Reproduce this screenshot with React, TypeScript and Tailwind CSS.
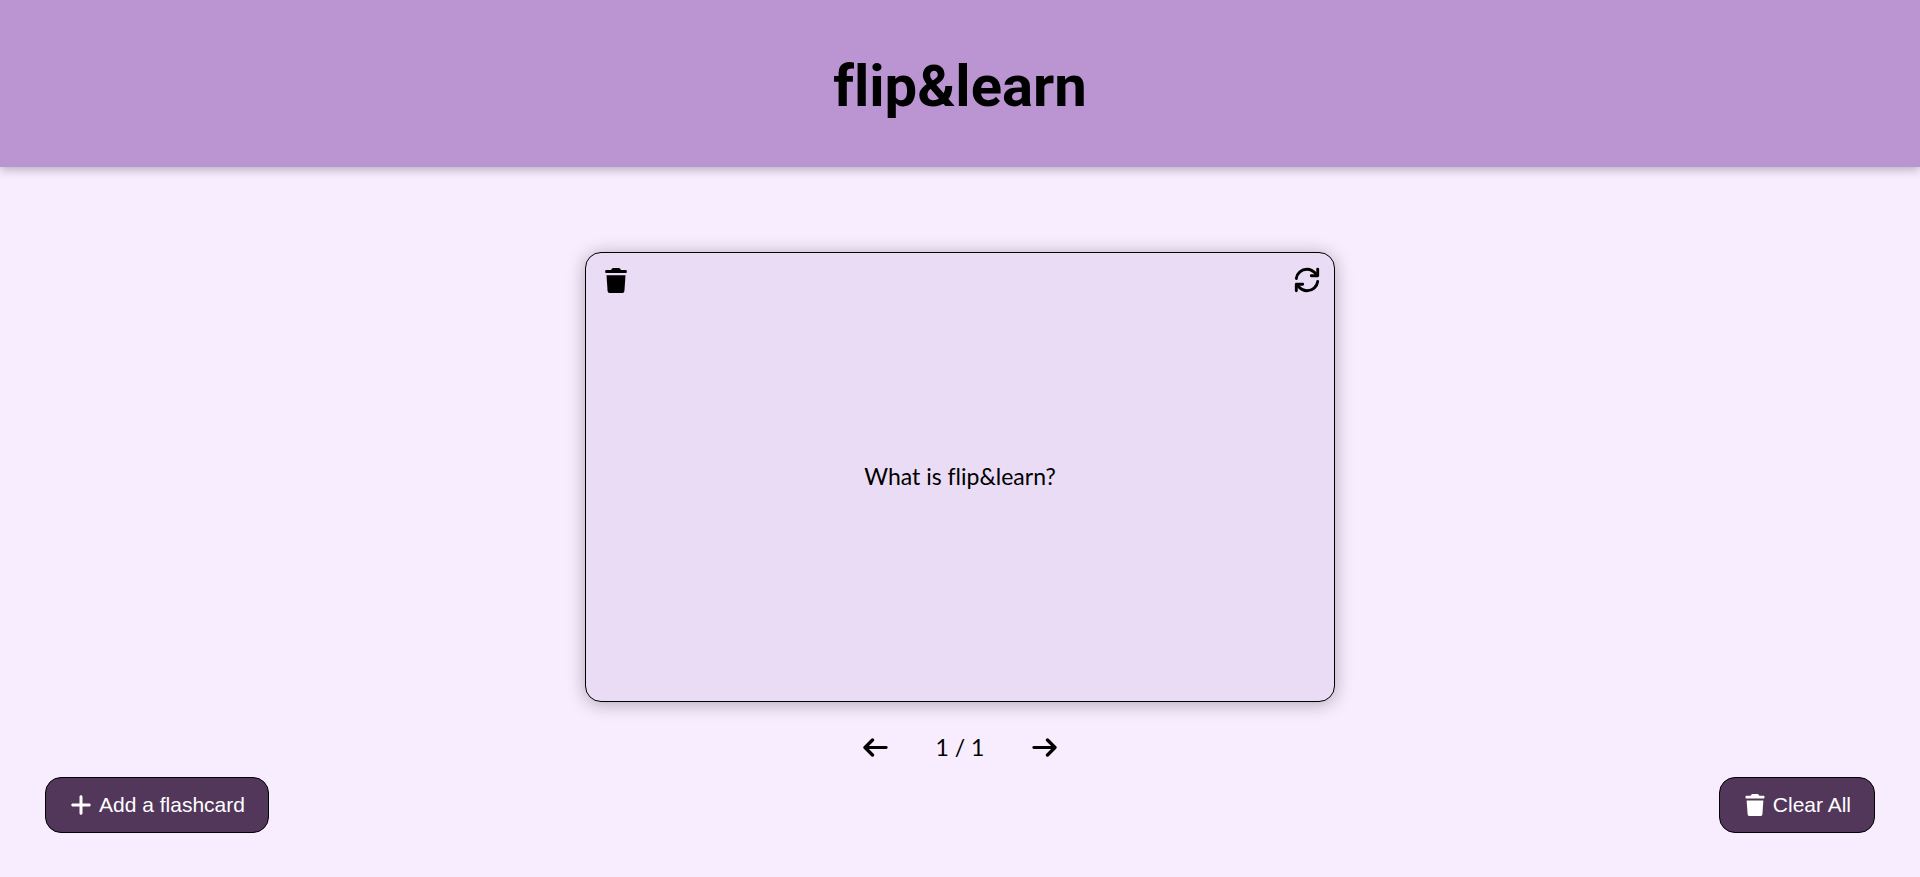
import { useState } from "react";
import { FaPlus } from "react-icons/fa6";

const card = {
  question: "What is flip&learn?",
  answer: "A flashcard app",
};

const actionButton =
  "flex h-14 items-center gap-1.5 rounded-2xl border border-black bg-[#52375b] px-[23px] font-['Liberation_Sans',sans-serif] text-[21px] text-white";

function TrashIcon({ className }: { className: string }) {
  return (
    <svg viewBox="0 0 22 25" fill="currentColor" className={className} aria-hidden="true">
      <path d="M8.2 0h5.600c.6 0 1.100.3 1.400.8l.7 1.300h4.700c.7 0 1.200.5 1.200 1.200v1c0 .5-.4.8-.8.8H1c-.4 0-.8-.3-.8-.8v-1c0-.7.5-1.200 1.200-1.200h4.700l.7-1.300C7.100.3 7.600 0 8.200 0z" />
      <path d="M1.500 7.300h19l-1.100 15.600c-.1 1.200-1 2.100-2.200 2.100H4.800c-1.200 0-2.100-.9-2.200-2.100z" />
    </svg>
  );
}

function FlipIcon({ className }: { className: string }) {
  return (
    <svg
      viewBox="0 0 26 26"
      fill="none"
      stroke="currentColor"
      strokeWidth="2.9"
      strokeLinecap="round"
      strokeLinejoin="round"
      className={className}
      aria-hidden="true"
    >
      <path d="M2.300 11.500C3 6 7.500 2.300 13 2.300c3.500 0 6.500 1.600 9.400 5.200" />
      <path d="M23.700 2.300V8.700H17.300" />
      <path d="M23.700 14.500C23 20 18.500 23.700 13 23.700c-3.500 0-6.500-1.600-9.400-5.200" />
      <path d="M2.300 23.700V17.300H8.700" />
    </svg>
  );
}

function ArrowIcon({ className }: { className: string }) {
  return (
    <svg
      viewBox="0 0 25 19"
      fill="none"
      stroke="currentColor"
      strokeLinecap="round"
      strokeLinejoin="round"
      className={className}
      aria-hidden="true"
    >
      <path strokeWidth="3.3" d="M9.500 2 2 9.500 9.500 17" />
      <path strokeWidth="2.800" d="M2.500 9.500H23.200" />
    </svg>
  );
}

export default function App() {
  const [flipped, setFlipped] = useState(false);

  return (
    <div className="flex min-h-screen flex-col bg-[#f8edff] font-[Lato,sans-serif] text-black">
      <header className="flex justify-center bg-[#ba95d2] pt-[46px] pb-[41px] shadow-[0_2px_10px_rgba(0,0,0,0.3)]">
        <h1 className="font-[Roboto,sans-serif] text-[58px] leading-20 font-bold [font-variant-ligatures:none]">
          flip&amp;learn
        </h1>
      </header>

      <main className="flex flex-col items-center px-6 pt-[85px]">
        <article className="flex h-[450px] w-full max-w-[750px] flex-col rounded-2xl border border-black bg-[#e9dcf4] px-3.5 pt-3.5 shadow-[0_2px_18px_rgba(0,0,0,0.3)]">
          <div className="flex items-center justify-between pl-[5px]">
            <button type="button" aria-label="Delete flashcard">
              <TrashIcon className="h-[25px] w-[22px]" />
            </button>
            <button
              type="button"
              aria-label="Flip flashcard"
              onClick={() => setFlipped(!flipped)}
            >
              <FlipIcon className="size-[26px]" />
            </button>
          </div>
          <p className="flex flex-1 items-center justify-center pb-[42px] text-[23px] [font-variant-ligatures:none]">
            {flipped ? card.answer : card.question}
          </p>
        </article>

        <nav className="mt-[27px] flex h-9 items-center gap-12" aria-label="Flashcards">
          <button type="button" aria-label="Previous flashcard">
            <ArrowIcon className="h-[19px] w-[25px]" />
          </button>
          <span className="text-[23px]">1 / 1</span>
          <button type="button" aria-label="Next flashcard">
            <ArrowIcon className="h-[19px] w-[25px] rotate-180" />
          </button>
        </nav>
      </main>

      <footer className="mt-3 flex items-center justify-between px-[45px]">
        <button type="button" className={actionButton}>
          <FaPlus className="size-6" />
          Add a flashcard
        </button>
        <button type="button" className={actionButton}>
          <TrashIcon className="h-[22px] w-6" />
          Clear All
        </button>
      </footer>
    </div>
  );
}
